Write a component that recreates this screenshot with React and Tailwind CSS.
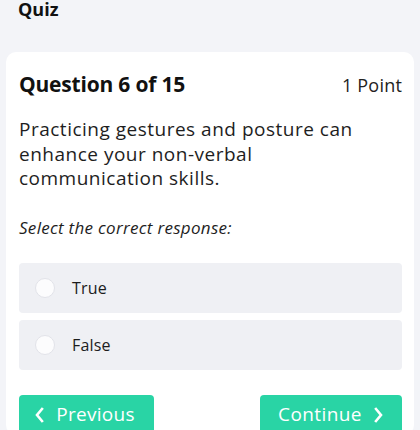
import React from "react";

const font = { fontFamily: '"Open Sans", "Noto Sans", sans-serif' };

function Radio({ label }) {
  return (
    <div className="flex h-[50px] items-center rounded-[4px] bg-[#eff0f4] pl-[16px]">
      <span className="h-[20px] w-[20px] rounded-full border border-[#e2e3e9] bg-[#fcfcfd]" />
      <span className="ml-[17px] text-[16px] font-medium tracking-[0.2px] text-[#1c1c1c]">{label}</span>
    </div>
  );
}

export default function App() {
  return (
    <div className="min-h-[430px] w-[420px] overflow-hidden bg-[#f3f4f8] text-[#111]" style={font}>
      <div className="h-[52px] overflow-hidden pl-[18px]">
        <div className="mt-[-3px] text-[18px] font-bold leading-[24px]">Quiz</div>
      </div>
      <div className="mx-[6px] rounded-[10px] bg-white pl-[13px] pr-[12px] pt-[18px]">
        <div className="flex items-baseline justify-between">
          <div className="text-[21px] font-bold leading-[28px] tracking-[-0.2px]">Question 6 of 15</div>
          <div className="text-[18px] leading-[28px] tracking-[0.2px] text-[#222]">1 Point</div>
        </div>
        <p className="mt-[18px] text-[19px] leading-[24.5px] tracking-[0.5px] text-[#1e1e1e]">
          Practicing gestures and posture can
          <br />
          enhance your non-verbal
          <br />
          communication skills.
        </p>
        <p className="mt-[26px] text-[17px] italic leading-[22px] tracking-[0.3px] text-[#1e1e1e]">
          Select the correct response:
        </p>
        <div className="mt-[24px] flex flex-col gap-[7px]">
          <Radio label="True" />
          <Radio label="False" />
        </div>
        <div className="mt-[25px] flex justify-between">
          <button className="flex h-[40px] w-[135px] items-center justify-center gap-[12px] rounded-[4px] bg-[#29d4a5] pr-[4px] text-[19px] tracking-[0.3px] text-white">
            <svg width="10" height="16" viewBox="0 0 10 16" fill="none" stroke="white" strokeWidth="2.6" strokeLinecap="square">
              <path d="M8 2 L3 8 L8 14" />
            </svg>
            Previous
          </button>
          <button className="flex h-[40px] w-[142px] items-center justify-center gap-[12px] rounded-[4px] bg-[#29d4a5] text-[19px] tracking-[0.4px] text-white">
            Continue
            <svg width="10" height="16" viewBox="0 0 10 16" fill="none" stroke="white" strokeWidth="2.6" strokeLinecap="square">
              <path d="M2 2 L7 8 L2 14" />
            </svg>
          </button>
        </div>
      </div>
    </div>
  );
}
